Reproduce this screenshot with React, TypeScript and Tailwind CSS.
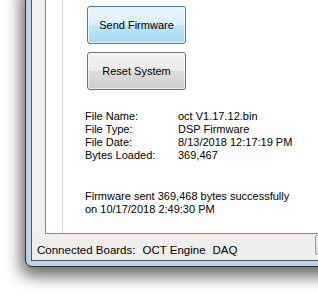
import React from 'react';

interface InfoRow {
    label: string;
    value: string;
}

const fileInfo: InfoRow[] = [
    { label: 'File Name:', value: 'oct V1.17.12.bin' },
    { label: 'File Type:', value: 'DSP Firmware' },
    { label: 'File Date:', value: '8/13/2018 12:17:19 PM' },
    { label: 'Bytes Loaded:', value: '369,467' },
];

const App: React.FC = () => {
    return (
        <div className="w-[318px] h-[303px] overflow-hidden bg-white text-black font-['Liberation_Sans',Arial,sans-serif]">
            {/* window frame */}
            <div className="ml-[25px] -mt-[10px] w-[330px] h-[277px] flex rounded-b-[7px] border border-[#2f2f2f] bg-[#bad2eb] px-[5px] pb-[5px] shadow-[0_5px_16px_4px_rgba(0,0,0,0.6)]">
                <div className="flex-1 flex flex-col border-l border-b border-[#4b5766]">
                    <div className="flex-1 flex bg-[#f0f0f0] pl-[13px]">
                        <div className="flex-1 flex bg-white border-l border-b border-[#828790] pl-[16px]">
                            <div className="flex-1 border-l border-[#cddcec] pl-[24px] pt-[15px] text-[11px]">
                                <button className="block w-[99px] h-[38px] rounded-[3px] border border-[#3c7fb1] bg-[linear-gradient(to_bottom,#eaf6fd_0%,#d9f0fc_50%,#bee6fd_50%,#a7d9f5_100%)] shadow-[inset_0_0_0_1px_rgba(255,255,255,0.7)] text-[11px]">
                                    Send Firmware
                                </button>
                                <button className="block mt-[8px] w-[99px] h-[38px] rounded-[3px] border border-[#707070] bg-[linear-gradient(to_bottom,#f2f2f2_0%,#ebebeb_50%,#dddddd_50%,#cfcfcf_100%)] shadow-[inset_0_0_0_1px_rgba(255,255,255,0.6)] text-[11px]">
                                    Reset System
                                </button>

                                <div className="-ml-[2px] mt-[20px] grid grid-cols-[93px_auto] leading-[13px]">
                                    {fileInfo.map((row) => (
                                        <React.Fragment key={row.label}>
                                            <span>{row.label}</span>
                                            <span>{row.value}</span>
                                        </React.Fragment>
                                    ))}
                                </div>

                                <div className="-ml-[2px] mt-[28px] leading-[13px]">
                                    Firmware sent 369,468 bytes successfully
                                    <br />
                                    on 10/17/2018 2:49:30 PM
                                </div>
                            </div>
                        </div>
                    </div>

                    {/* status strip */}
                    <div className="h-[26px] flex bg-[#f0eeec] pl-[5px] text-[11.5px] leading-[14px]">
                        <div className="pt-[9px] flex">
                            <span>Connected Boards:</span>
                            <span className="ml-[7px]">OCT Engine</span>
                            <span className="ml-[7px]">DAQ</span>
                        </div>
                        <div className="ml-auto mr-[12px] mt-[1px] w-[22px] h-[20px] rounded-[2px] border border-[#9a9a9a] bg-[linear-gradient(to_bottom,#f6f6f6,#dcdcdc)]" />
                    </div>
                </div>
            </div>
        </div>
    );
};

export default App;
